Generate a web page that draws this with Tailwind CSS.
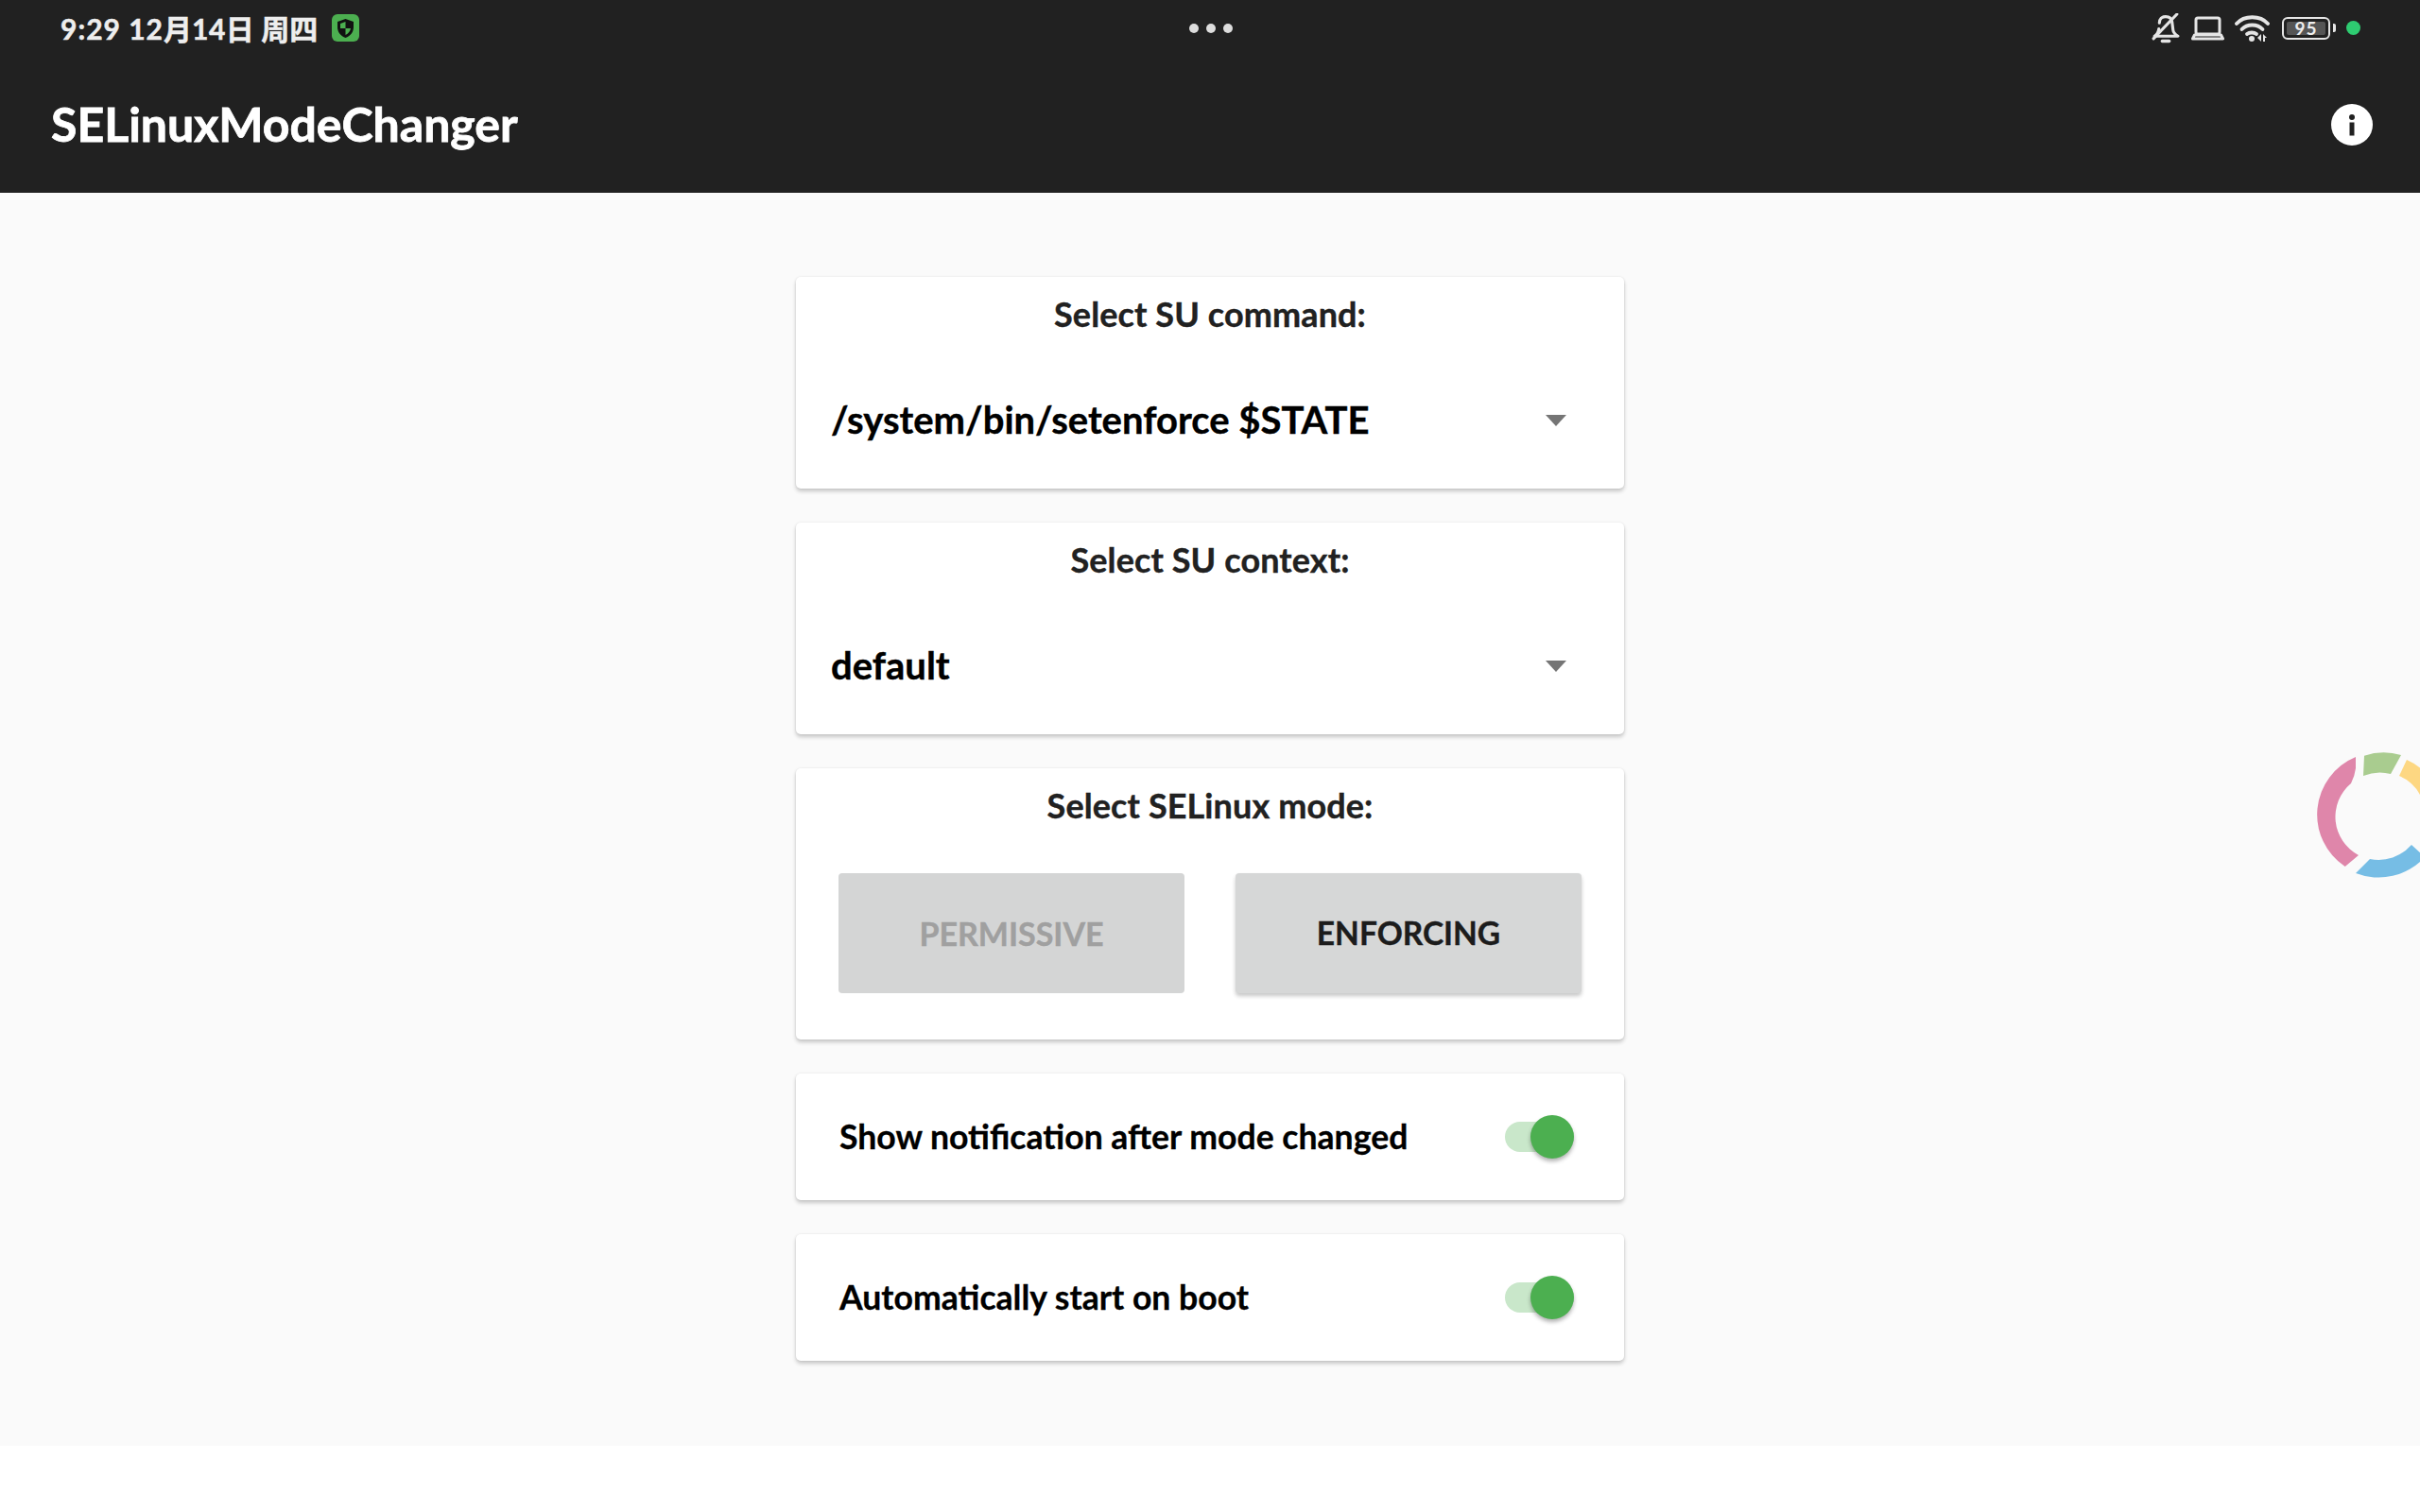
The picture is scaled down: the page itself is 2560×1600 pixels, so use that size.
<!doctype html>
<html>
<head>
<meta charset="utf-8">
<script src="https://cdn.jsdelivr.net/npm/@tailwindcss/browser@4"></script>
</head>
<body class="relative h-[1600px] w-[2560px] overflow-hidden bg-white font-['Lato','Noto_Sans_CJK_SC',sans-serif]">
<header class="flex h-[204px] flex-col bg-[#212121]">
  <div class="grid h-[59px] grid-cols-3 items-center pl-[64px] pr-[63px]">
    <div class="flex items-center gap-[15px]">
      <span class="text-[30px] font-bold leading-none text-[#eeeeee] [-webkit-text-stroke:0.5px_#eeeeee]"><span class="tracking-[1px]">9:29 12</span>月<span class="tracking-[0.5px]">14</span>日 周四</span>
      <span class="flex h-[29px] w-[29px] items-center justify-center rounded-[6px] bg-[#4caf50]">
        <svg width="19" height="22" viewBox="0 0 19 22"><path d="M9.5 1 L18 4 V10 C18 15 14.5 19 9.5 21 C4.5 19 1 15 1 10 V4 Z" fill="#111"/><path d="M9.5 4 V11 H4 V6 Z M9.5 11 H15 C14.5 14 12.5 16.5 9.5 18 Z" fill="#4caf50"/></svg>
      </span>
    </div>
    <div class="flex items-center justify-center gap-[8px]">
      <span class="h-[10px] w-[10px] rounded-full bg-[#dddddd]"></span>
      <span class="h-[10px] w-[10px] rounded-full bg-[#dddddd]"></span>
      <span class="h-[10px] w-[10px] rounded-full bg-[#dddddd]"></span>
    </div>
    <div class="flex items-center justify-end">
      <svg class="mr-[12px]" width="30" height="32" viewBox="0 0 29 31" fill="none" stroke="#e5e5e5" stroke-width="3" stroke-linecap="round" stroke-linejoin="round"><path d="M8 10 C8 6 10.5 3.5 14.5 3.5 C18 3.5 20.5 5.5 21 9 L22 17 C22.3 20 24 21.5 27 23.5 H3 C5.5 22 7 20 7.5 16"/><path d="M26 1 L2 26"/><path d="M11 28.5 H18" stroke-width="3.4"/></svg>
      <svg class="mr-[11px]" width="35" height="26" viewBox="0 0 35 26" fill="none" stroke="#e5e5e5" stroke-width="3" stroke-linejoin="round" stroke-linecap="round"><rect x="5" y="2" width="25" height="17" rx="2"/><path d="M1.5 24 L3.5 20 H31.5 L33.5 24 Z"/></svg>
      <svg class="mr-[13px]" width="37" height="28" viewBox="0 0 37 28" fill="none"><g stroke="#e5e5e5" stroke-width="3.8" stroke-linecap="round"><path d="M2 9 C10 0 27 0 35 9"/><path d="M7.5 15 C13 9 24 9 29.5 15"/><path d="M13 20 C15.5 18 20.5 18 23 20"/></g><circle cx="18" cy="25" r="3" fill="#e5e5e5"/><path d="M28 20 V28 L24 24 Z M30 20 L34 24 H32 V28 H30 Z" fill="#e5e5e5"/></svg>
      <div class="mr-[3px] flex h-[24px] w-[51px] items-center rounded-[6px] border-[2px] border-[#e5e5e5] p-[3px]">
        <span class="flex h-full w-full items-center justify-center rounded-[2px] bg-[#555555] text-[19px] font-bold leading-none tracking-[1px] text-[#eeeeee]">95</span>
      </div>
      <span class="mr-[11px] h-[9px] w-[3px] rounded-r-[2px] bg-[#e5e5e5]"></span>
      <span class="h-[15px] w-[15px] rounded-full bg-[#2ecc71]"></span>
    </div>
  </div>
  <div class="flex flex-1 items-center justify-between pb-[2px] pl-[54px] pr-[50px]">
    <h1 class="text-[50px] font-bold leading-none text-white [-webkit-text-stroke:0.8px_#ffffff]">SELinuxModeChanger</h1>
    <svg class="mt-[2px]" width="44" height="44" viewBox="0 0 44 44"><circle cx="22" cy="22" r="22" fill="#fff"/><circle cx="22" cy="14" r="3" fill="#212121"/><rect x="19.5" y="19.5" width="5" height="14" fill="#212121"/></svg>
  </div>
</header>
<main class="flex h-[1326px] flex-col items-center gap-[36px] bg-[#fafafa] pt-[89px]">
  <section class="flex h-[224px] w-[876px] flex-col rounded-[5px] bg-white shadow-[0_3px_4px_rgba(0,0,0,0.2),0_0_3px_rgba(0,0,0,0.08)]">
    <h2 class="mt-[23px] text-center text-[36px] font-bold leading-[32px] tracking-[0.1px] text-[#212121] [-webkit-text-stroke:0.4px_#212121]">Select SU command:</h2>
    <div class="mt-[74px] flex items-center justify-between pl-[37px] pr-[61px]">
      <span class="text-[40px] font-bold leading-[44px] text-black [-webkit-text-stroke:0.4px_#000000]">/system/bin/setenforce $STATE</span>
      <svg class="mt-[2px]" width="22" height="12" viewBox="0 0 22 12"><path d="M0 0 H22 L11 12 Z" fill="#757575"/></svg>
    </div>
  </section>
  <section class="flex h-[224px] w-[876px] flex-col rounded-[5px] bg-white shadow-[0_3px_4px_rgba(0,0,0,0.2),0_0_3px_rgba(0,0,0,0.08)]">
    <h2 class="mt-[23px] text-center text-[36px] font-bold leading-[32px] tracking-[0.1px] text-[#212121] [-webkit-text-stroke:0.4px_#212121]">Select SU context:</h2>
    <div class="mt-[74px] flex items-center justify-between pl-[37px] pr-[61px]">
      <span class="text-[40px] font-bold leading-[44px] text-black [-webkit-text-stroke:0.4px_#000000]">default</span>
      <svg class="mt-[2px]" width="22" height="12" viewBox="0 0 22 12"><path d="M0 0 H22 L11 12 Z" fill="#757575"/></svg>
    </div>
  </section>
  <section class="flex h-[287px] w-[876px] flex-col rounded-[5px] bg-white shadow-[0_3px_4px_rgba(0,0,0,0.2),0_0_3px_rgba(0,0,0,0.08)]">
    <h2 class="mt-[23px] text-center text-[36px] font-bold leading-[32px] tracking-[0.1px] text-[#212121] [-webkit-text-stroke:0.4px_#212121]">Select SELinux mode:</h2>
    <div class="mt-[56px] flex gap-[54px] pl-[45px] pr-[45px]">
      <div class="flex h-[127px] w-[366px] items-center justify-center rounded-[4px] bg-[#d4d5d5] pb-[1px] text-[34px] font-bold text-[#a0a0a0] [-webkit-text-stroke:0.4px_#a0a0a0]">PERMISSIVE</div>
      <div class="flex h-[127px] w-[366px] items-center justify-center rounded-[4px] bg-[#d6d7d7] text-[33.5px] font-bold text-[#1c1c1c] shadow-[0_3px_4px_rgba(0,0,0,0.22)] [-webkit-text-stroke:0.4px_#1c1c1c]">ENFORCING</div>
    </div>
  </section>
  <section class="flex h-[134px] w-[876px] items-center justify-between rounded-[5px] bg-white pl-[46px] pr-[53px] shadow-[0_3px_4px_rgba(0,0,0,0.2),0_0_3px_rgba(0,0,0,0.08)]">
    <span class="text-[35.6px] font-bold text-black [-webkit-text-stroke:0.3px_#000000]">Show notification after mode changed</span>
    <span class="relative h-[32px] w-[73px] rounded-full bg-[#c9e7ca]"><span class="absolute right-0 top-[-7px] h-[46px] w-[46px] rounded-full bg-[#4caf50] shadow-[0_3px_4px_rgba(0,0,0,0.3)]"></span></span>
  </section>
  <section class="flex h-[134px] w-[876px] items-center justify-between rounded-[5px] bg-white pl-[46px] pr-[53px] shadow-[0_3px_4px_rgba(0,0,0,0.2),0_0_3px_rgba(0,0,0,0.08)]">
    <span class="text-[35.6px] font-bold text-black [-webkit-text-stroke:0.3px_#000000]">Automatically start on boot</span>
    <span class="relative h-[32px] w-[73px] rounded-full bg-[#c9e7ca]"><span class="absolute right-0 top-[-7px] h-[46px] w-[46px] rounded-full bg-[#4caf50] shadow-[0_3px_4px_rgba(0,0,0,0.3)]"></span></span>
  </section>
</main>
<svg class="absolute left-[2399px] top-[761px] blur-[0.6px]" width="161" height="178" viewBox="0 0 161 178">
  <path d="M93 40 A66 66 0 0 0 81.7 156 L96 144 A46 46 0 0 1 88 68 Q92 60 93 52 Z" fill="#df86aa"/>
  <path d="M102 38.7 A66 66 0 0 1 141 38 L130 58 A46 46 0 0 0 101 60 Z" fill="#a9cc8f"/>
  <path d="M147 43 A66 66 0 0 1 180 76 L163 84 A46 46 0 0 0 139 60 Z" fill="#fdd782"/>
  <path d="M93 163 A66 66 0 0 0 166 146 L152 133 A46 46 0 0 1 108 148 Z" fill="#76bde5"/>
</svg>
</body>
</html>
